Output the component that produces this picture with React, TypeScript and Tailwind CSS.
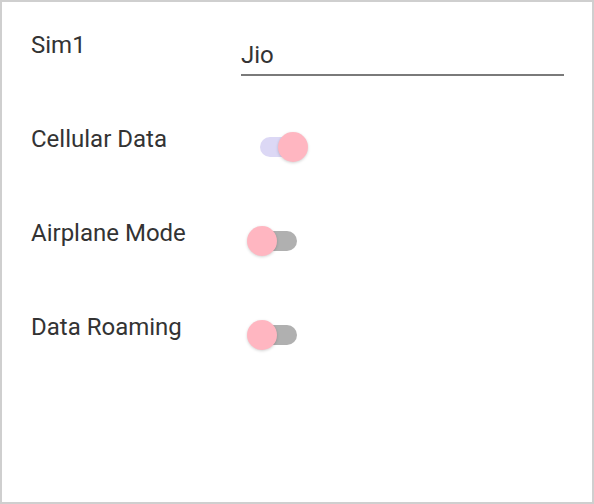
import React from "react";

function Toggle({ on }: { on: boolean }) {
  return (
    <div className="relative w-[61px] h-[30px] ml-[6px] mt-[7px]">
      <div
        className={
          "absolute left-[13px] top-[5px] w-[37px] h-[20px] rounded-full " +
          (on ? "bg-[#dcd8f5]" : "bg-[#b0b0b0]")
        }
      />
      <div
        className={
          "absolute top-0 w-[30px] h-[30px] rounded-full bg-[#ffb6c1] shadow-[0_1px_3px_rgba(0,0,0,0.18)] " +
          (on ? "left-[31px]" : "left-0")
        }
      />
    </div>
  );
}

export default function App() {
  const rows: { label: string; on: boolean }[] = [
    { label: "Cellular Data", on: true },
    { label: "Airplane Mode", on: false },
    { label: "Data Roaming", on: false },
  ];
  return (
    <div
      className="w-[594px] h-[504px] border-2 border-[#cfcfcf] bg-white text-[#333333] text-[24px] leading-[28px] pt-[29px] pl-[29px]"
      style={{ fontFamily: "Roboto, 'Noto Sans', sans-serif" }}
    >
      <div className="flex h-[94px]">
        <div className="w-[210px]">Sim1</div>
        <div className="w-[323px] pt-[10px]">
          <div className="pb-[5px] border-b-2 border-[#7a7a7a] leading-[28px]">Jio</div>
        </div>
      </div>
      {rows.map((r) => (
        <div key={r.label} className="flex h-[94px]">
          <div className="w-[210px]">{r.label}</div>
          <Toggle on={r.on} />
        </div>
      ))}
    </div>
  );
}
